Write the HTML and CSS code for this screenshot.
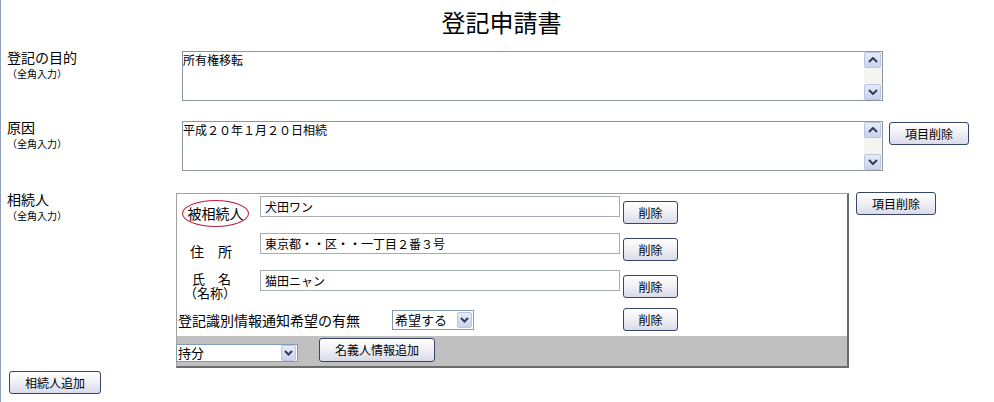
FILE: index.html
```html
<!DOCTYPE html>
<html lang="ja">
<head>
<meta charset="utf-8">
<title>登記申請書</title>
<link rel="stylesheet" href="styles.css">
</head>
<body>
<div class="page">
  <h1 class="title">登記申請書</h1>

  <div class="row r1">
    <div class="label"><div class="lbl">登記の目的</div><div class="sub">（全角入力）</div></div>
    <div class="ta">
      <textarea class="ta-in">所有権移転</textarea>
      <div class="sb">
        <span class="sb-btn"><svg width="10" height="6" viewBox="0 0 10 6"><path d="M1 5 L5 1 L9 5" fill="none" stroke="#2f3d5c" stroke-width="2"/></svg></span>
        <span class="sb-track"></span>
        <span class="sb-btn"><svg width="10" height="6" viewBox="0 0 10 6"><path d="M1 1 L5 5 L9 1" fill="none" stroke="#2f3d5c" stroke-width="2"/></svg></span>
      </div>
    </div>
  </div>

  <div class="row r2">
    <div class="label"><div class="lbl">原因</div><div class="sub">（全角入力）</div></div>
    <div class="ta">
      <textarea class="ta-in">平成２０年１月２０日相続</textarea>
      <div class="sb">
        <span class="sb-btn"><svg width="10" height="6" viewBox="0 0 10 6"><path d="M1 5 L5 1 L9 5" fill="none" stroke="#2f3d5c" stroke-width="2"/></svg></span>
        <span class="sb-track"></span>
        <span class="sb-btn"><svg width="10" height="6" viewBox="0 0 10 6"><path d="M1 1 L5 5 L9 1" fill="none" stroke="#2f3d5c" stroke-width="2"/></svg></span>
      </div>
    </div>
    <button class="btn btn-item btn-item2">項目削除</button>
  </div>

  <div class="row r3">
    <div class="label"><div class="lbl">相続人</div><div class="sub">（全角入力）</div></div>
    <div class="box">
      <div class="prow">
        <div class="plabel"><span class="ellipse">被相続人</span></div>
        <input class="in" type="text" value="犬田ワン">
        <button class="btn btn-del">削除</button>
      </div>
      <div class="prow">
        <div class="plabel"><span class="addr">住　所</span></div>
        <input class="in" type="text" value="東京都・・区・・一丁目２番３号">
        <button class="btn btn-del">削除</button>
      </div>
      <div class="prow">
        <div class="plabel"><div class="nm">氏　名（名称）</div></div>
        <input class="in" type="text" value="猫田ニャン">
        <button class="btn btn-del">削除</button>
      </div>
      <div class="prow prow4">
        <div class="r4left">
          <span class="kbl">登記識別情報通知希望の有無</span>
          <span class="sel sel-kibo">
            <select class="sel-in"><option>希望する</option><option>希望しない</option></select>
            <span class="sel-btn"><svg width="9" height="6" viewBox="0 0 9 6"><path d="M1 1 L4.5 4.5 L8 1" fill="none" stroke="#2f3d5c" stroke-width="2"/></svg></span>
          </span>
        </div>
        <button class="btn btn-del btn-del4">削除</button>
      </div>
      <div class="bar">
        <span class="sel sel-mochi">
          <select class="sel-in"><option>持分</option></select>
          <span class="sel-btn"><svg width="9" height="6" viewBox="0 0 9 6"><path d="M1 1 L4.5 4.5 L8 1" fill="none" stroke="#2f3d5c" stroke-width="2"/></svg></span>
        </span>
        <button class="btn btn-add">名義人情報追加</button>
      </div>
    </div>
    <button class="btn btn-item btn-item3">項目削除</button>
  </div>

  <button class="btn btn-heir">相続人追加</button>
</div>
</body>
</html>
```

FILE: styles.css
```css
* { box-sizing: border-box; }

body {
  margin: 0;
  background: #fff;
  color: #000;
  font-family: "Noto Sans CJK JP", "Liberation Sans", sans-serif;
}

.page {
  border-left: 1px solid #8f9fb7;
  min-height: 402px;
}

.title {
  margin: 0;
  height: 51px;
  font-size: 24px;
  font-weight: normal;
  line-height: 44px;
  text-align: center;
  padding-left: 8px;
}

.row {
  display: flex;
  align-items: flex-start;
}

.r1 { margin-bottom: 20px; }
.r2 { margin-bottom: 22px; }

.label {
  width: 175px;
  flex: none;
  padding-left: 6px;
}

.lbl {
  font-size: 14px;
  line-height: 16px;
  margin-top: -2px;
}

.sub {
  font-size: 10px;
  line-height: 12px;
  margin-top: 3px;
}

/* textarea with classic scrollbar */
.ta {
  margin-left: 6px;
  width: 701px;
  height: 50px;
  border: 1px solid #8e979f;
  display: flex;
  background: #fff;
}

.ta-in {
  flex: 1;
  border: 0;
  margin: 0;
  resize: none;
  outline: none;
  overflow: hidden;
  padding: 0;
  font-family: "Noto Sans CJK JP", sans-serif;
  font-size: 12px;
  line-height: 16px;
  color: #000;
  background: #fff;
}

.sb {
  width: 18px;
  flex: none;
  display: flex;
  flex-direction: column;
  background: #f4f4f0;
  padding: 0 1px 0 0;
}

.sb-btn {
  height: 16px;
  display: flex;
  align-items: center;
  justify-content: center;
  border: 1px solid #bac6de;
  border-radius: 2px;
  background: linear-gradient(#e6ebf8, #c9d3ec);
}

.sb-track { flex: 1; }

/* buttons */
.btn {
  font-family: "Noto Sans CJK JP", sans-serif;
  font-size: 12px;
  line-height: 14px;
  color: #000;
  border: 1px solid #37456a;
  border-radius: 3px;
  background: linear-gradient(#ffffff 0%, #f1f1f6 45%, #d9dbe9 100%);
  padding: 0;
  flex: none;
}

.btn-item {
  width: 80px;
  height: 23px;
}

.btn-item2 {
  margin-left: 6px;
  margin-top: 1px;
}

.btn-item3 {
  margin-left: 7px;
  margin-top: -1px;
}

/* 相続人 box */
.box {
  width: 673px;
  flex: none;
  border-top: 1px solid #a0a0a0;
  border-left: 1px solid #a0a0a0;
  border-right: 2px solid #6b6b6b;
  border-bottom: 2px solid #6b6b6b;
  background: #fff;
}

.prow {
  display: flex;
  align-items: flex-start;
  height: 37px;
}

.plabel {
  width: 83px;
  flex: none;
  font-size: 14px;
  line-height: 16px;
}

.ellipse {
  display: inline-block;
  margin-top: 6px;
  margin-left: 5px;
  width: 67px;
  height: 27px;
  border: 1px solid #c41a3c;
  border-radius: 50%;
  text-align: center;
  line-height: 25px;
  font-size: 14px;
}

.addr {
  display: block;
  margin-top: 12px;
  padding-left: 13px;
}

.nm {
  width: 60px;
  margin-top: 4px;
  padding-left: 7px;
  text-indent: 8px;
  font-size: 13px;
  line-height: 14px;
}

.in {
  margin: 2px 0 0 0;
  width: 360px;
  height: 21px;
  border: 1px solid #a5acb2;
  padding: 0 4px;
  font-family: "Noto Sans CJK JP", sans-serif;
  font-size: 12px;
  color: #000;
  outline: none;
}

.btn-del {
  margin-top: 7px;
  margin-left: 3px;
  width: 55px;
  height: 23px;
}

.prow4 { height: 31px; }

.r4left {
  width: 446px;
  flex: none;
  display: flex;
  align-items: flex-start;
}

.kbl {
  width: 215px;
  flex: none;
  padding-left: 1px;
  margin-top: 7px;
  font-size: 14px;
  line-height: 16px;
  white-space: nowrap;
}

.btn-del4 {
  margin-top: 3px;
  margin-left: 0;
}

/* select look */
.sel {
  display: flex;
  border: 1px solid #7f9db9;
  background: #fff;
  flex: none;
  padding: 1px;
}

.sel-in {
  appearance: none;
  -webkit-appearance: none;
  border: 0;
  outline: none;
  background: #fff;
  flex: 1;
  min-width: 0;
  padding: 0 0 0 1px;
  font-family: "Noto Sans CJK JP", sans-serif;
  font-size: 13px;
  line-height: 14px;
  color: #000;
}

.sel-btn {
  width: 15px;
  flex: none;
  display: flex;
  align-items: center;
  justify-content: center;
  border: 1px solid #bac6de;
  border-radius: 2px;
  background: linear-gradient(#e6ebf8, #c9d3ec);
}

.sel-kibo {
  margin-top: 5px;
  width: 82px;
  height: 20px;
}

.bar {
  height: 30px;
  background: #c0c0c0;
  display: flex;
  align-items: flex-start;
}

.sel-mochi {
  margin-top: 8px;
  margin-left: -1px;
  width: 122px;
  height: 18px;
  padding: 0 1px 0 0;
}

.btn-add {
  margin-top: 2px;
  margin-left: 21px;
  width: 116px;
  height: 24px;
}

.btn-heir {
  display: block;
  margin-top: 3px;
  margin-left: 8px;
  width: 92px;
  height: 23px;
}
```
